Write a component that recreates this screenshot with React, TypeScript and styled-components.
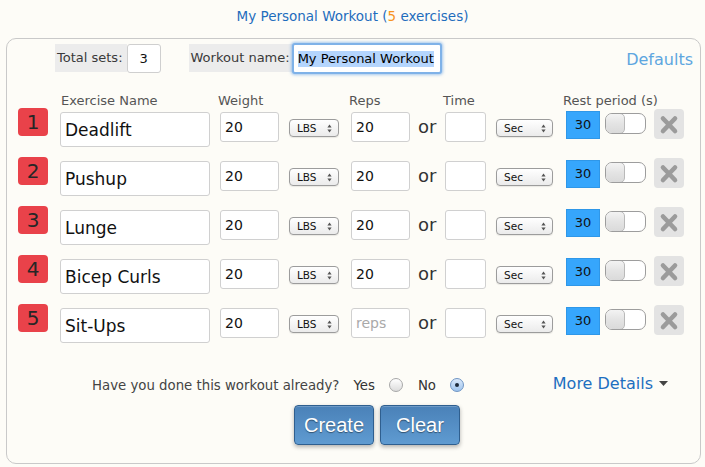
import React from "react";
import styled, { createGlobalStyle } from "styled-components";

const Global = createGlobalStyle`
  html, body { margin: 0; padding: 0; background: #fdfcf7; }
  body {
    font-family: "DejaVu Sans", Verdana, sans-serif;
    width: 705px; height: 467px; overflow: hidden;
  }
  * { box-sizing: border-box; }
  input { font-family: "DejaVu Sans", Verdana, sans-serif; }
`;

const Page = styled.div`
  width: 705px;
`;

const Title = styled.div`
  height: 38px;
  padding-top: 8px;
  text-align: center;
  font-size: 13.5px;
  line-height: 16px;
  color: #1f6dbd;
`;

const Count = styled.span`
  color: #f7931e;
`;

const Panel = styled.div`
  margin: 0 4px 0 6px;
  height: 426px;
  border: 1px solid #c9c9c9;
  border-radius: 10px;
  padding: 5px 7px 0 11px;
`;

const TopBar = styled.div`
  display: flex;
  align-items: flex-start;
  height: 30px;
  padding-left: 37px;
`;

const FieldGroup = styled.div<{ $gap?: number }>`
  display: flex;
  align-items: flex-start;
  margin-left: ${(p) => p.$gap ?? 0}px;
`;

const GroupLabel = styled.div<{ $pad?: number }>`
  height: 28px;
  line-height: 28px;
  background: #ececec;
  font-size: 13px;
  color: #3a3a3a;
  padding: 0 ${(p) => p.$pad ?? 0}px 0 ${(p) => (p.$pad ? 2 : 0)}px;
`;

const SetsInput = styled.input`
  width: 34px;
  height: 29px;
  border: 1px solid #cfcfcf;
  border-radius: 3px;
  background: #fff;
  font-size: 13px;
  color: #111;
  text-align: center;
  padding: 0;
  outline: none;
`;

const FocusInput = styled.div`
  width: 150px;
  height: 31px;
  margin-top: -1px;
  border: 2px solid #7fb2e8;
  border-radius: 3px;
  box-shadow: 0 0 3px 1px rgba(90, 155, 230, 0.55);
  background: #fff;
  display: flex;
  align-items: center;
  padding-left: 4px;
  font-size: 13px;
  color: #000;
  white-space: nowrap;
`;

const Selected = styled.span`
  background: #b4d5fd;
  line-height: 16px;
`;

const Defaults = styled.div`
  margin-left: auto;
  margin-top: 6px;
  font-size: 16px;
  line-height: 19px;
  color: #5da6e0;
`;

const cols = "42px 160px 69px 62px 67px 27px 51px 70px 39px 49px 30px";

const HeaderRow = styled.div`
  display: grid;
  grid-template-columns: ${cols};
  margin-top: 19px;
  height: 15px;
  font-size: 13px;
  line-height: 15px;
  color: #555;
  white-space: nowrap;
`;

const HeadLabel = styled.div<{ $col: number; $shift?: number }>`
  grid-column: ${(p) => p.$col};
  margin-left: ${(p) => p.$shift ?? 0}px;
`;

const Row = styled.div`
  display: grid;
  grid-template-columns: ${cols};
  align-items: start;
  height: 49px;
`;

const Badge = styled.div`
  width: 30px;
  height: 28px;
  border-radius: 4px;
  background: #e9424a;
  color: #262626;
  font-size: 20px;
  line-height: 29px;
  text-align: center;
`;

const TextBox = styled.input<{ $w: number; $h?: number; $fs?: number }>`
  width: ${(p) => p.$w}px;
  height: ${(p) => p.$h ?? 30}px;
  margin-top: 4px;
  border: 1px solid #d0d0d0;
  border-radius: 3px;
  background: #fff;
  font-size: ${(p) => p.$fs ?? 14}px;
  color: #111;
  padding: 0 0 0 4px;
  outline: none;
  &::placeholder { color: #a9a9a9; }
`;

const SelectBox = styled.div<{ $w: number }>`
  width: ${(p) => p.$w}px;
  height: 18px;
  margin-top: 11px;
  border: 1px solid #9c9c9c;
  border-radius: 4px;
  background: linear-gradient(#ffffff, #ebebeb);
  box-shadow: 0 1px 1px rgba(0, 0, 0, 0.08);
  display: flex;
  align-items: center;
  justify-content: space-between;
  padding: 0 6px 0 7px;
  font-size: 10.5px;
  color: #111;
`;

const Or = styled.div`
  margin-top: 4px;
  height: 30px;
  line-height: 29px;
  font-size: 18px;
  color: #333;
`;

const Rest = styled.div`
  width: 34px;
  height: 28px;
  margin-top: 3px;
  background: #36a6fc;
  border: 1px solid #2f97e8;
  font-size: 13px;
  line-height: 26px;
  text-align: center;
  color: #111;
`;

const Track = styled.div`
  width: 41px;
  height: 21px;
  margin-top: 5px;
  border: 1px solid #9d9d9d;
  border-radius: 7px;
  background: #fff;
  display: flex;
  align-items: stretch;
  overflow: hidden;
`;

const Knob = styled.div`
  width: 20px;
  margin: -1px 0 -1px -1px;
  border: 1px solid #b9b9b9;
  border-radius: 5px;
  background: linear-gradient(#f3f3f3, #e4e4e4 50%, #dadada);
`;

const RemoveBtn = styled.div`
  width: 30px;
  height: 30px;
  margin-top: 1px;
  border-radius: 4px;
  background: #e3e3e3;
  display: flex;
  align-items: center;
  justify-content: center;
`;

const BottomRow = styled.div`
  display: flex;
  align-items: center;
  height: 18px;
  margin-top: 23px;
  padding: 0 25px 0 74px;
  font-size: 13.3px;
  color: #444;
  white-space: nowrap;
`;

const Opt = styled.span<{ $gap: number }>`
  margin-left: ${(p) => p.$gap}px;
  color: #333;
`;

const Radio = styled.span<{ $on?: boolean; $gap: number }>`
  margin-left: ${(p) => p.$gap}px;
  width: 14px;
  height: 14px;
  border-radius: 50%;
  border: 1px solid ${(p) => (p.$on ? "#6f95c4" : "#a8a8a8")};
  background: ${(p) =>
    p.$on ? "linear-gradient(#dbe9fa, #9ec4ee)" : "linear-gradient(#ffffff, #dcdcdc)"};
  display: flex;
  align-items: center;
  justify-content: center;
  &::after {
    content: "";
    width: 4px;
    height: 4px;
    border-radius: 50%;
    background: ${(p) => (p.$on ? "#1d2a3a" : "transparent")};
  }
`;

const More = styled.div`
  margin-left: auto;
  margin-bottom: 4px;
  display: flex;
  align-items: center;
  gap: 6px;
  font-size: 16px;
  color: #1d6fc0;
`;

const ButtonRow = styled.div`
  display: flex;
  gap: 6px;
  margin-top: 11px;
  padding-left: 276px;
`;

const BigButton = styled.button`
  width: 80px;
  height: 40px;
  border: 1px solid #2f5f8f;
  border-radius: 4px;
  background: linear-gradient(#4a81b8, #5f9bd1);
  box-shadow: 0 2px 4px rgba(0, 0, 0, 0.3), inset 0 1px 0 rgba(255, 255, 255, 0.2);
  color: #fff;
  font-family: "Liberation Sans", Arial, sans-serif;
  font-size: 20px;
  text-shadow: 0 1px 1px rgba(0, 0, 0, 0.45);
  padding: 0;
`;

const Arrows = () => (
  <svg width="5" height="9" viewBox="0 0 5 9">
    <path d="M2.5 0.5 L4.6 3.4 L0.4 3.4 Z" fill="#555" />
    <path d="M2.5 8.5 L4.6 5.6 L0.4 5.6 Z" fill="#555" />
  </svg>
);

const XIcon = () => (
  <svg width="30" height="30" viewBox="0 0 30 30">
    <path
      d="M9 9.5 L21 22 M21 9.5 L9 22"
      stroke="#9b9b9b"
      strokeWidth="4.6"
      strokeLinecap="round"
    />
  </svg>
);

const Caret = () => (
  <svg width="9" height="5" viewBox="0 0 9 5">
    <path d="M0 0 L9 0 L4.5 5 Z" fill="#444" />
  </svg>
);

type Ex = { name: string; weight: string; reps: string };

const exercises: Ex[] = [
  { name: "Deadlift", weight: "20", reps: "20" },
  { name: "Pushup", weight: "20", reps: "20" },
  { name: "Lunge", weight: "20", reps: "20" },
  { name: "Bicep Curls", weight: "20", reps: "20" },
  { name: "Sit-Ups", weight: "20", reps: "" },
];

export default function App() {
  return (
    <Page>
      <Global />
      <Title>
        My Personal Workout (<Count>5</Count> exercises)
      </Title>
      <Panel>
        <TopBar>
          <FieldGroup>
            <GroupLabel $pad={4}>Total sets:</GroupLabel>
            <SetsInput defaultValue="3" readOnly />
          </FieldGroup>
          <FieldGroup $gap={28}>
            <GroupLabel $pad={2}>Workout name:</GroupLabel>
            <FocusInput>
              <Selected>My Personal Workout</Selected>
            </FocusInput>
          </FieldGroup>
          <Defaults>Defaults</Defaults>
        </TopBar>

        <HeaderRow>
          <HeadLabel $col={2} $shift={1}>Exercise Name</HeadLabel>
          <HeadLabel $col={3} $shift={-2}>Weight</HeadLabel>
          <HeadLabel $col={5} $shift={-2}>Reps</HeadLabel>
          <HeadLabel $col={7} $shift={-2}>Time</HeadLabel>
          <HeadLabel $col={9} $shift={-3}>Rest period (s)</HeadLabel>
        </HeaderRow>

        {exercises.map((ex, i) => (
          <Row key={ex.name}>
            <Badge>{i + 1}</Badge>
            <TextBox $w={150} $h={35} $fs={17} defaultValue={ex.name} readOnly />
            <TextBox $w={59} defaultValue={ex.weight} readOnly />
            <SelectBox $w={50}>
              LBS
              <Arrows />
            </SelectBox>
            <TextBox $w={59} defaultValue={ex.reps} placeholder="reps" readOnly />
            <Or>or</Or>
            <TextBox $w={41} readOnly />
            <SelectBox $w={57}>
              Sec
              <Arrows />
            </SelectBox>
            <Rest>30</Rest>
            <Track>
              <Knob />
            </Track>
            <RemoveBtn>
              <XIcon />
            </RemoveBtn>
          </Row>
        ))}

        <BottomRow>
          <span>Have you done this workout already?</span>
          <Opt $gap={14}>Yes</Opt>
          <Radio $gap={14} />
          <Opt $gap={15}>No</Opt>
          <Radio $gap={14} $on />
          <More>
            More Details <Caret />
          </More>
        </BottomRow>

        <ButtonRow>
          <BigButton>Create</BigButton>
          <BigButton>Clear</BigButton>
        </ButtonRow>
      </Panel>
    </Page>
  );
}
